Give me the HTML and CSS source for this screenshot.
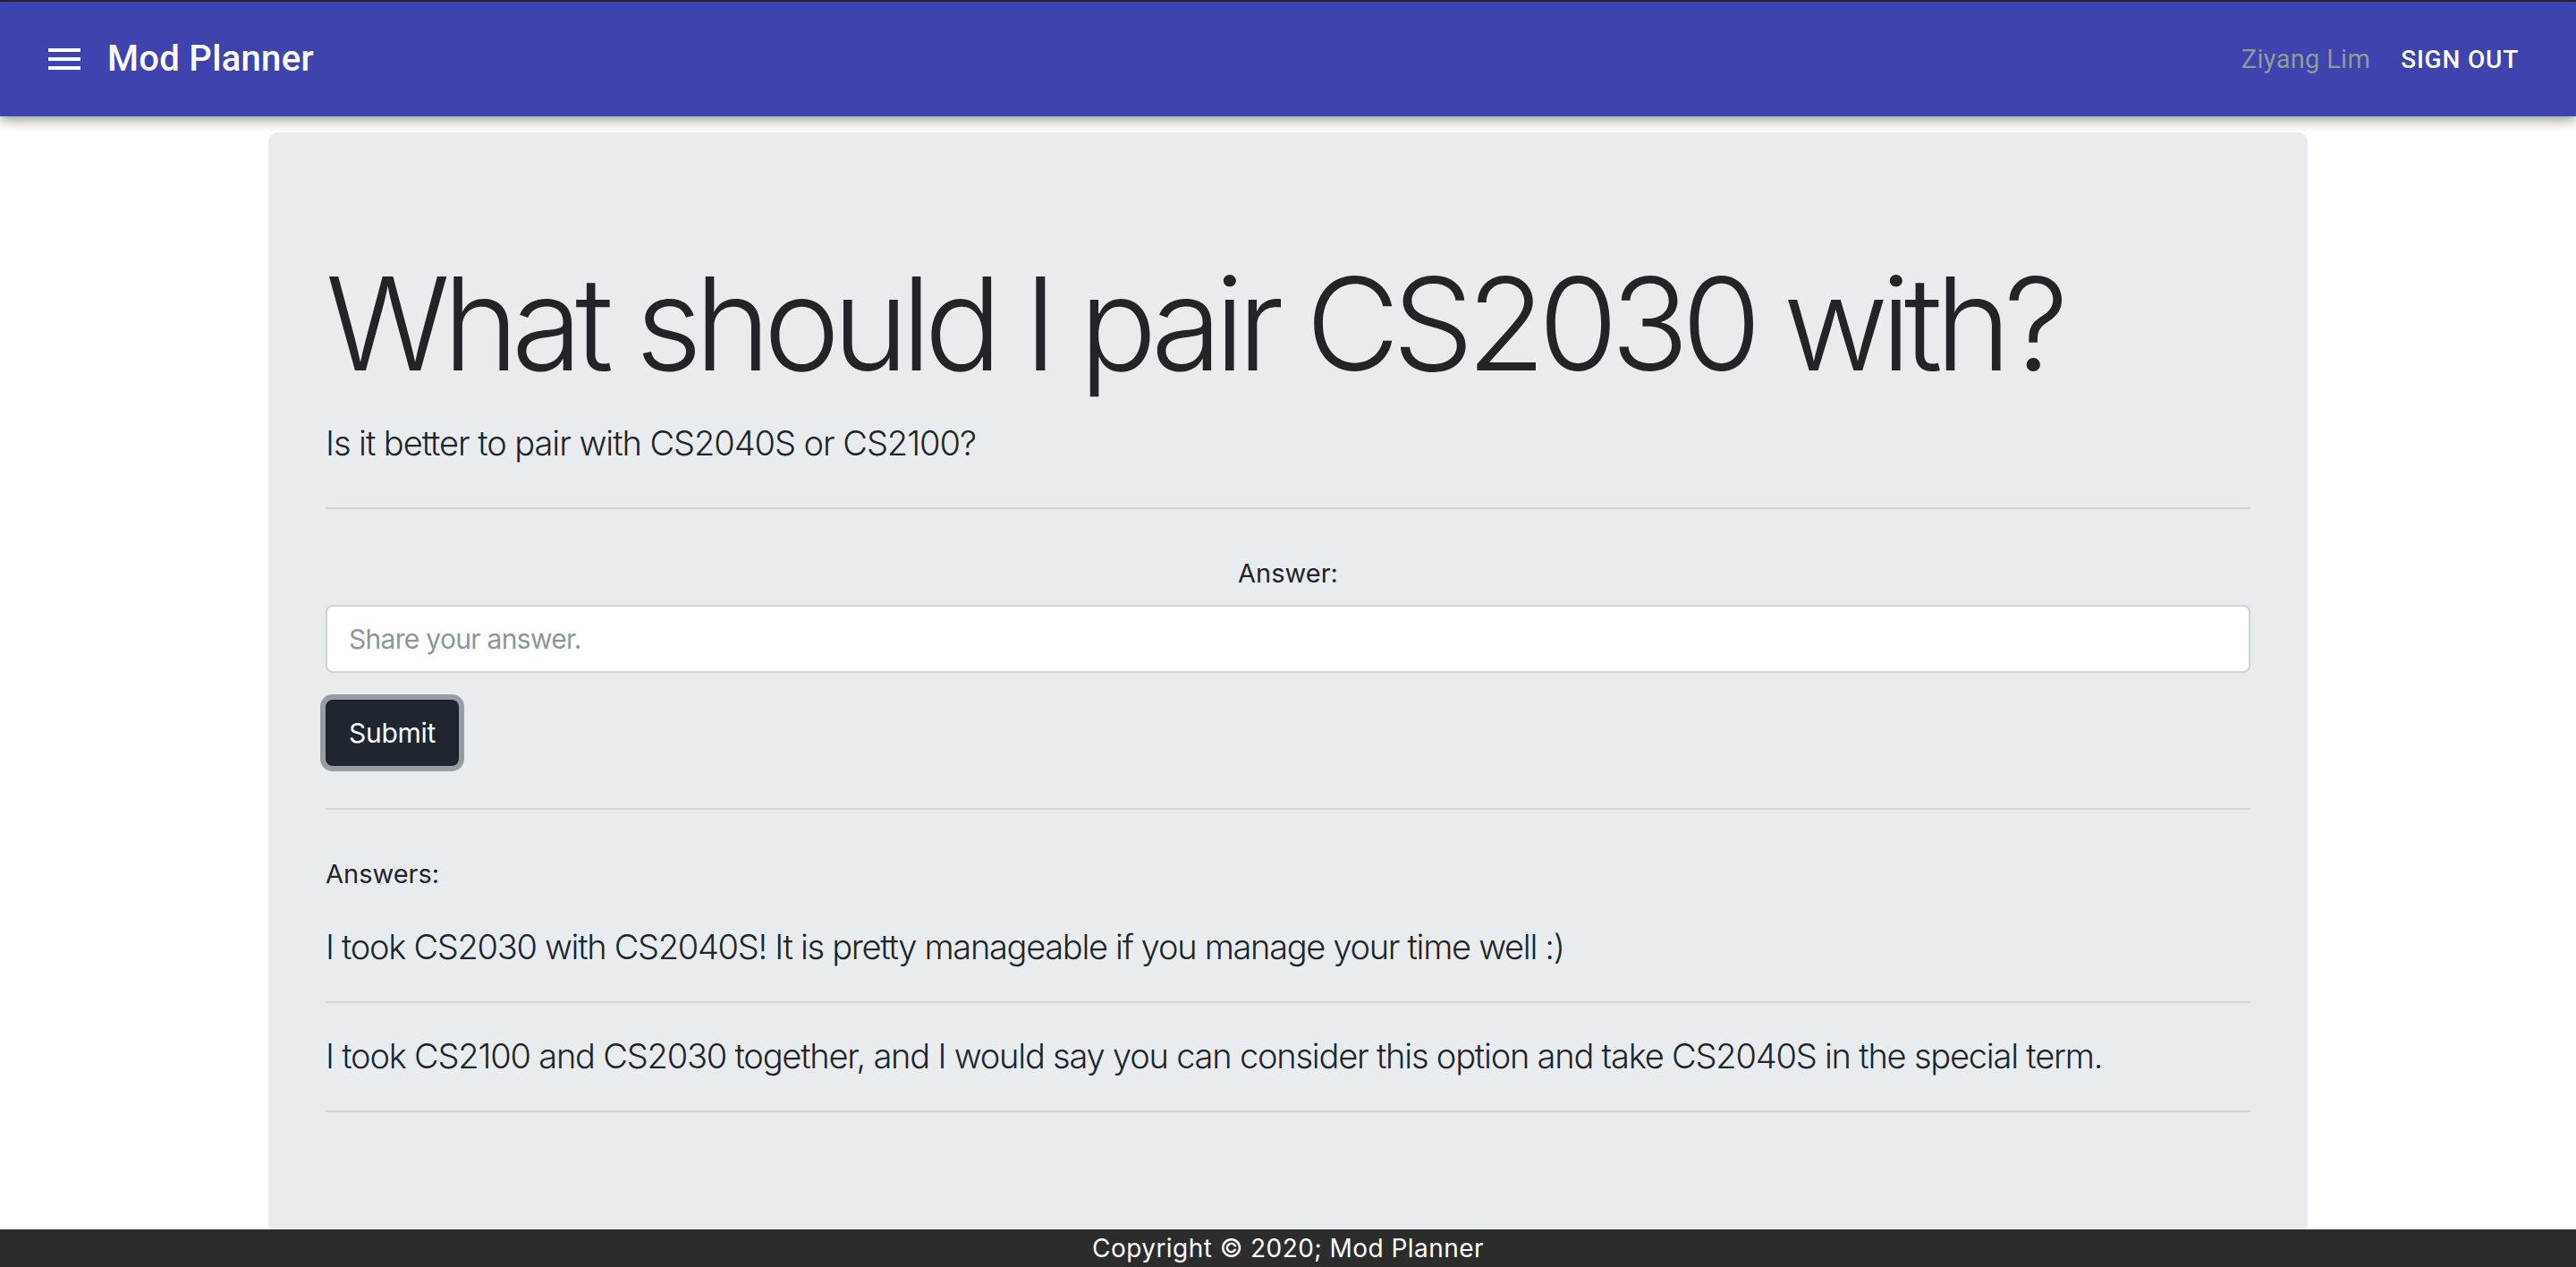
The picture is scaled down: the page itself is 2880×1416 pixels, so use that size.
FILE: index.html
```html
<!DOCTYPE html>
<html lang="en">
<head>
<meta charset="utf-8">
<title>Mod Planner</title>
<link rel="stylesheet" href="styles.css">
</head>
<body>
<div class="frame-top"></div>
<header class="appbar">
  <button class="menu-btn" aria-label="menu">
    <svg class="menu-icon" viewBox="0 0 24 24" width="48" height="48"><path d="M3 18h18v-2H3v2zm0-5h18v-2H3v2zm0-7v2h18V6H3z"/></svg>
  </button>
  <h6 class="brand">Mod Planner</h6>
  <div class="spacer"></div>
  <span class="user">Ziyang Lim</span>
  <button class="signout">Sign Out</button>
</header>

<main class="container">
  <section class="jumbotron">
    <h1 class="display">What should I pair CS2030 with?</h1>
    <p class="lead">Is it better to pair with CS2040S or CS2100?</p>
    <hr class="rule rule-first">
    <form class="answer-form">
      <label class="form-label" for="answer">Answer:</label>
      <input class="form-control" id="answer" type="text" placeholder="Share your answer.">
      <button class="btn-submit" type="button">Submit</button>
    </form>
    <hr class="rule rule-second">
    <div class="answers-title">Answers:</div>
    <div class="answer">
      <p class="answer-text">I took CS2030 with CS2040S! It is pretty manageable if you manage your time well :)</p>
      <hr class="rule">
    </div>
    <div class="answer">
      <p class="answer-text">I took CS2100 and CS2030 together, and I would say you can consider this option and take CS2040S in the special term.</p>
      <hr class="rule">
    </div>
  </section>
</main>

<footer class="footer">Copyright © 2020; Mod Planner</footer>
</body>
</html>
```

FILE: styles.css
```css
html, body {
  margin: 0;
  padding: 0;
  background: #ffffff;
}

body {
  font-family: Inter, "Noto Sans", "Liberation Sans", sans-serif;
  color: #212529;
  min-height: 1416px;
}

.frame-top {
  height: 2px;
  background: #2b2b2b;
}

.appbar {
  height: 128px;
  display: flex;
  align-items: center;
  padding: 0 48px;
  background: #3f43ad;
  color: #ffffff;
  font-family: Roboto, "Liberation Sans", sans-serif;
  box-shadow: 0 4px 8px -2px rgba(0,0,0,0.2), 0 8px 10px 0 rgba(0,0,0,0.14), 0 2px 20px 0 rgba(0,0,0,0.12);
  position: relative;
  z-index: 2;
}

.menu-btn {
  margin-left: -24px;
  margin-right: 0;
  padding: 24px;
  border: 0;
  background: transparent;
  display: flex;
  cursor: pointer;
}

.menu-icon {
  fill: #ffffff;
  display: block;
}

.brand {
  margin: 0;
  font-size: 40px;
  font-weight: 500;
  line-height: 1.6;
  letter-spacing: 0.3px;
}

.spacer {
  flex: 1;
}

.user {
  font-size: 29px;
  font-weight: 400;
  color: #8d9b9a;
  margin-right: 18px;
  letter-spacing: 0.3px;
}

.signout {
  border: 0;
  background: transparent;
  color: #ffffff;
  font-family: Roboto, "Liberation Sans", sans-serif;
  font-size: 28px;
  font-weight: 500;
  text-transform: uppercase;
  letter-spacing: 0.8px;
  padding: 12px 16px;
  line-height: 1.75;
  margin-right: 0;
}

.container {
  width: 2280px;
  margin: 18px auto 0;
}

.jumbotron {
  background: #e9ecef;
  border-radius: 10px;
  padding: 128px 64px 160px;
}

.display {
  margin: 0 0 16px;
  font-size: 144px;
  font-weight: 300;
  line-height: 1.2;
  letter-spacing: -8px;
}

.lead {
  margin: 0;
  font-size: 38px;
  font-weight: 300;
  line-height: 60px;
  letter-spacing: -1.05px;
}

.rule {
  border: 0;
  border-top: 2px solid rgba(0,0,0,0.1);
  margin: 0;
}

.rule-first {
  margin-top: 42px;
}

.answer-form {
  display: flex;
  flex-direction: column;
  align-items: stretch;
  padding-top: 50px;
}

.form-label {
  text-align: center;
  font-size: 29px;
  line-height: 1.5;
  margin-bottom: 14px;
}

.form-control {
  height: 76px;
  box-sizing: border-box;
  border: 2px solid #ced4da;
  border-radius: 8px;
  background: #ffffff;
  padding: 12px 24px;
  font-family: Inter, "Noto Sans", sans-serif;
  font-size: 30px;
  letter-spacing: -0.7px;
  color: #495057;
}

.form-control::placeholder {
  color: #8c9898;
}

.btn-submit {
  align-self: flex-start;
  margin-top: 30px;
  height: 74px;
  box-sizing: border-box;
  padding: 0 24px;
  border: 2px solid #1d232b;
  border-radius: 8px;
  background: #1f262f;
  color: #ffffff;
  font-family: Inter, "Noto Sans", sans-serif;
  font-size: 30px;
  letter-spacing: -0.3px;
  box-shadow: 0 0 0 6px #979da3;
}

.rule-second {
  margin-top: 47px;
}

.answers-title {
  font-size: 29px;
  line-height: 1.5;
  margin-top: 50px;
}

.answer-text {
  margin: 29px 0 31px;
  font-size: 38px;
  font-weight: 300;
  line-height: 60px;
  letter-spacing: -1.3px;
}

.answer + .answer .answer-text {
  margin-top: 29px;
  letter-spacing: -1.2px;
}

.footer {
  position: fixed;
  left: 0;
  right: 0;
  bottom: 0;
  height: 42px;
  background: #2c2c2c;
  color: #ffffff;
  text-align: center;
  font-size: 28px;
  line-height: 42px;
  letter-spacing: 0.45px;
  z-index: 3;
}
```
